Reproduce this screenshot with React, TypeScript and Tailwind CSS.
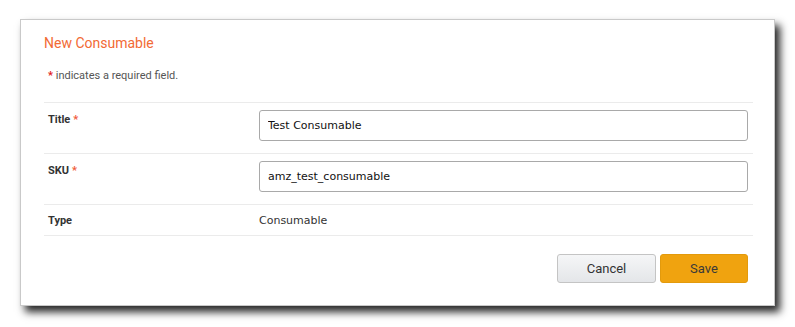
export default function App() {
    return (
        <div className="h-[327px] w-[795px] bg-white pt-[19px] pl-[20px]">
            <div className="h-[287px] w-[755px] border border-[#c9c9c9] bg-white pt-[13px] pr-[21px] pl-[23px] shadow-[5px_6px_8px_rgba(0,0,0,0.85)]">
                <h2 className="font-['Roboto',sans-serif] text-[14px] leading-[20px] text-[#f26a35]">
                    New Consumable
                </h2>
                <p className="mt-[15px] pl-[4px] font-['Roboto',sans-serif] text-[11px] leading-[16px] text-[#555]">
                    <span className="font-bold text-[#e21b1b]">*</span> indicates a
                    required field.
                </p>

                <div className="mt-[18px]">
                    <FieldRow label="Title" required value="Test Consumable" />
                    <FieldRow label="SKU" required value="amz_test_consumable" />
                    <div className="flex border-y border-[#ebebeb] pt-[8px] pb-[6px]">
                        <div className="w-[215px] pl-[4px] font-['Roboto',sans-serif] text-[11px] leading-[16px] font-bold text-[#333]">
                            Type
                        </div>
                        <div className="font-['DejaVu_Sans',sans-serif] text-[11px] leading-[16px] text-[#333]">
                            Consumable
                        </div>
                    </div>
                </div>

                <div className="mt-[18px] mr-[5px] flex justify-end gap-[4px] font-['Roboto',sans-serif] text-[13px]">
                    <button className="h-[29px] w-[99px] rounded-[3px] border border-[#c4c4c4] bg-gradient-to-b from-[#f5f6f7] to-[#e4e6e9] text-[#333]">
                        Cancel
                    </button>
                    <button className="h-[29px] w-[88px] rounded-[3px] border border-[#e39a0c] bg-[#f0a30f] text-[#3a3a3a]">
                        Save
                    </button>
                </div>
            </div>
        </div>
    );
}

interface FieldRowProps {
    label: string;
    required?: boolean;
    value: string;
}

function FieldRow({ label, required, value }: FieldRowProps) {
    return (
        <div className="flex border-t border-[#ebebeb] pt-[7px] pb-[12px]">
            <div className="w-[215px] pl-[4px] pt-[2px] font-['Roboto',sans-serif] text-[11px] leading-[16px] font-bold text-[#333]">
                {label}
                {required && <span className="ml-[3px] text-[#f05a3a]">*</span>}
            </div>
            <div className="flex-1 pr-[5px]">
                <input
                    readOnly
                    value={value}
                    className="h-[31px] w-full rounded-[3px] border border-[#a9a9a9] px-[8px] font-['DejaVu_Sans',sans-serif] text-[11px] text-[#111] outline-none"
                />
            </div>
        </div>
    );
}
